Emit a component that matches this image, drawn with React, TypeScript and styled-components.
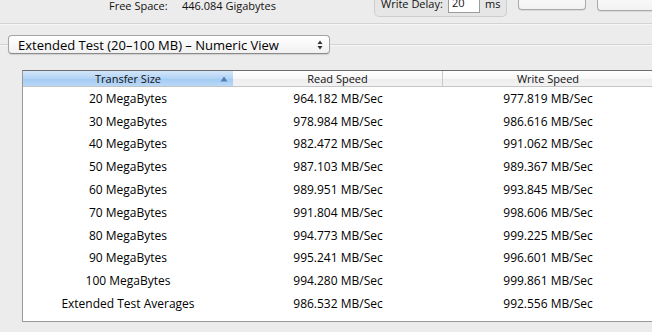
import React from "react";
import styled, { createGlobalStyle } from "styled-components";

const GlobalStyle = createGlobalStyle`
  html, body { margin: 0; padding: 0; }
  body {
    width: 652px;
    height: 332px;
    overflow: hidden;
    background: #ececec;
    font-family: "Open Sans", "DejaVu Sans", sans-serif;
    color: #000;
  }
`;

const Page = styled.div`
  width: 652px;
  height: 332px;
  overflow: hidden;
  background: #ececec;
`;

const TopBar = styled.div`
  display: flex;
  align-items: flex-end;
  height: 23px;
  padding-left: 109px;
  border-bottom: 1px solid #d3d3d3;
  box-shadow: 0 1px 0 #f6f6f6;
  & > * { flex-shrink: 0; }
`;

const InfoGroup = styled.div`
  display: flex;
  width: 265px;
  margin-bottom: 11px;
  font-size: 11px;
  line-height: 13px;
  color: #111;
`;

const InfoLabel = styled.span`
  width: 73px;
`;

const DelayBox = styled.div`
  display: flex;
  align-items: flex-end;
  box-sizing: border-box;
  width: 133px;
  height: 30px;
  margin-bottom: 6px;
  padding: 0 6px 3px;
  border: 1px solid #cdcdcd;
  border-top: none;
  border-radius: 0 0 5px 5px;
  background: #e6e6e6;
  font-size: 11px;
  line-height: 13px;
  color: #111;
  & > * { flex-shrink: 0; }
`;

const DelayLabel = styled.span`
  width: 67px;
  padding-bottom: 3px;
  white-space: nowrap;
`;

const DelayInput = styled.div`
  box-sizing: border-box;
  width: 32px;
  height: 19px;
  padding: 2px 0 0 3px;
  background: #fff;
  border: 1px solid #9c9c9c;
  border-top: none;
  font-size: 11px;
  line-height: 13px;
`;

const DelayUnit = styled.span`
  margin-left: 5px;
  padding-bottom: 3px;
`;

const Button = styled.div<{ $w: number; $mb: number }>`
  box-sizing: border-box;
  width: ${(p) => p.$w}px;
  height: 22px;
  margin-left: 11px;
  margin-bottom: ${(p) => p.$mb}px;
  border: 1px solid #a9a9a9;
  border-top: none;
  border-radius: 0 0 4px 4px;
  background: linear-gradient(#fdfdfd, #f3f3f3);
  box-shadow: 0 1px 0 rgba(0, 0, 0, 0.08);
`;

const PopupRow = styled.div`
  display: flex;
  align-items: center;
  height: 19px;
  margin-top: 11px;
`;

const Rule = styled.div<{ $w?: number }>`
  ${(p) => (p.$w ? `width: ${p.$w}px;` : "flex: 1;")}
  border-top: 1px solid #d2d2d2;
  box-shadow: 0 1px 0 #f7f7f7;
`;

const Popup = styled.div`
  display: flex;
  align-items: center;
  justify-content: space-between;
  box-sizing: border-box;
  width: 322px;
  height: 19px;
  padding: 0 6px 0 9px;
  border: 1px solid #a4a4a4;
  border-bottom-color: #8a8a8a;
  border-radius: 4px;
  background: linear-gradient(#ffffff, #f1f1f1);
  box-shadow: 0 1px 1px rgba(0, 0, 0, 0.12);
  font-size: 13px;
  color: #000;
`;

const Table = styled.div`
  box-sizing: border-box;
  width: 640px;
  margin: 16px 0 0 22px;
  padding-bottom: 6px;
  background: #fff;
  border: 1px solid #999;
  border-top-color: #6d6d6d;
`;

const HeaderRow = styled.div`
  display: grid;
  grid-template-columns: 210px 210px 210px;
  height: 15px;
  border-bottom: 1px solid #c4c4c4;
`;

const HeaderCell = styled.div<{ $active?: boolean; $divider?: boolean }>`
  position: relative;
  display: flex;
  align-items: center;
  justify-content: center;
  font-size: 11px;
  color: #111;
  background: ${(p) =>
    p.$active
      ? "linear-gradient(#d3e6fa 0%, #b3d3f5 50%, #a4cbf3 55%, #b9d8f7 100%)"
      : "linear-gradient(#ffffff 0%, #f7f7f7 50%, #eeeeee 55%, #f2f2f2 100%)"};
  border-right: ${(p) => (p.$divider ? "1px solid #c9c9c9" : "none")};
`;

const SortArrow = styled.svg`
  position: absolute;
  right: 5px;
  top: 5px;
`;

const Row = styled.div`
  display: grid;
  grid-template-columns: 210px 210px 210px;
  height: 22.8px;
  align-items: center;
  font-size: 12px;
  color: #000;
`;

const Cell = styled.div`
  text-align: center;
`;

const rows: [string, string, string][] = [
  ["20 MegaBytes", "964.182 MB/Sec", "977.819 MB/Sec"],
  ["30 MegaBytes", "978.984 MB/Sec", "986.616 MB/Sec"],
  ["40 MegaBytes", "982.472 MB/Sec", "991.062 MB/Sec"],
  ["50 MegaBytes", "987.103 MB/Sec", "989.367 MB/Sec"],
  ["60 MegaBytes", "989.951 MB/Sec", "993.845 MB/Sec"],
  ["70 MegaBytes", "991.804 MB/Sec", "998.606 MB/Sec"],
  ["80 MegaBytes", "994.773 MB/Sec", "999.225 MB/Sec"],
  ["90 MegaBytes", "995.241 MB/Sec", "996.601 MB/Sec"],
  ["100 MegaBytes", "994.280 MB/Sec", "999.861 MB/Sec"],
  ["Extended Test Averages", "986.532 MB/Sec", "992.556 MB/Sec"],
];

export default function App() {
  return (
    <Page>
      <GlobalStyle />
      <TopBar>
        <InfoGroup>
          <InfoLabel>Free Space:</InfoLabel>
          <span>446.084 Gigabytes</span>
        </InfoGroup>
        <DelayBox>
          <DelayLabel>Write Delay:</DelayLabel>
          <DelayInput>20</DelayInput>
          <DelayUnit>ms</DelayUnit>
        </DelayBox>
        <Button $w={68} $mb={13} />
        <Button $w={70} $mb={12} />
      </TopBar>
      <PopupRow>
        <Rule $w={8} />
        <Popup>
          <span>Extended Test (20–100 MB) – Numeric View</span>
          <svg width="6" height="10" viewBox="0 0 6 10">
            <path d="M3 0.5 L5.5 4 L0.5 4 Z" fill="#333" />
            <path d="M3 9.5 L5.5 6 L0.5 6 Z" fill="#333" />
          </svg>
        </Popup>
        <Rule />
      </PopupRow>
      <Table>
        <HeaderRow>
          <HeaderCell $active>
            Transfer Size
            <SortArrow width="8" height="6" viewBox="0 0 8 6">
              <path d="M4 0.5 L7.5 5.5 L0.5 5.5 Z" fill="#4f7fb8" />
            </SortArrow>
          </HeaderCell>
          <HeaderCell $divider>Read Speed</HeaderCell>
          <HeaderCell>Write Speed</HeaderCell>
        </HeaderRow>
        {rows.map((r) => (
          <Row key={r[0]}>
            <Cell>{r[0]}</Cell>
            <Cell>{r[1]}</Cell>
            <Cell>{r[2]}</Cell>
          </Row>
        ))}
      </Table>
    </Page>
  );
}
